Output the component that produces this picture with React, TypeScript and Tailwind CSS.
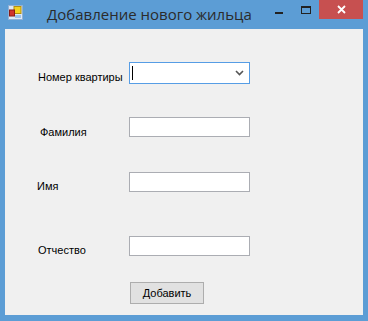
import React from "react";

/** WinForms風のラベル */
function Label({ text, left, top }: { text: string; left: number; top: number }) {
  return (
    <div className="w-[124px] shrink-0" style={{ paddingLeft: left, paddingTop: top }}>
      <span className="block whitespace-nowrap text-[11px] leading-[13px] text-black">{text}</span>
    </div>
  );
}

/** 白いテキストボックス */
function TextBox() {
  return <div className="h-[20px] w-[121px] border border-[#abadb3] bg-white" />;
}

function AppIcon() {
  return (
    <svg width="15" height="15" viewBox="0 0 15 15">
      <rect x="0.5" y="0.5" width="14" height="14" fill="#dfe9f5" stroke="#8fb0d6" />
      <rect x="6" y="1.5" width="7" height="7" fill="#f4d21f" stroke="#b08f10" />
      <rect x="1.5" y="5" width="5" height="6" fill="#d0342c" stroke="#8a1c16" />
      <rect x="7" y="10" width="6" height="3" fill="#9cc3ea" />
    </svg>
  );
}

export default function App() {
  return (
    <div className="flex h-[321px] w-[368px] flex-col overflow-hidden bg-[#5c9dd5] font-['Liberation_Sans',Arial,sans-serif]">
      {/* タイトルバー */}
      <div className="flex h-[29px] shrink-0 items-start">
        <div className="ml-[8px] mt-[5px]">
          <AppIcon />
        </div>
        <div className="ml-[24px] mt-[4px] font-['Open_Sans',sans-serif] text-[15px] leading-[20px] text-[#2b2b2b]">
          Добавление нового жильца
        </div>
        <div className="flex-1" />
        <div className="mt-[12px] h-[2px] w-[8px] bg-[#222]" />
        <div className="ml-[18px] mt-[6px] h-[8px] w-[10px] border border-t-2 border-[#222]" />
        <div className="ml-[8px] mr-[5px] flex h-[19px] w-[44px] items-center justify-center bg-[#c75050]">
          <svg width="9" height="9" viewBox="0 0 9 9">
            <path d="M1 1 L8 8 M8 1 L1 8" stroke="#fff" strokeWidth="1.8" />
          </svg>
        </div>
      </div>

      {/* クライアント領域 */}
      <div className="mx-[5px] h-[286px] shrink-0 bg-[#f0f0f0] pt-[33px]">
        <div className="flex h-[22px] items-start">
          <Label text="Номер квартиры" left={33} top={9} />
          <div className="flex h-[22px] w-[121px] shrink-0 items-center border border-[#569de5] bg-white">
            <div className="ml-[2px] h-[14px] w-px bg-black" />
            <div className="flex-1" />
            <svg width="9" height="6" viewBox="0 0 9 6" className="mr-[5px]">
              <path d="M1 1 L4.5 4.5 L8 1" stroke="#555" strokeWidth="1.6" fill="none" />
            </svg>
          </div>
        </div>

        <div className="mt-[33px] flex h-[20px] items-start">
          <Label text="Фамилия" left={35} top={9} />
          <TextBox />
        </div>

        <div className="mt-[35px] flex h-[20px] items-start">
          <Label text="Имя" left={32} top={8} />
          <TextBox />
        </div>

        <div className="mt-[44px] flex h-[20px] items-start">
          <Label text="Отчество" left={33} top={8} />
          <TextBox />
        </div>

        <div className="ml-[125px] mt-[26px] flex h-[22px] w-[74px] items-center justify-center border border-[#adadad] bg-[#e1e1e1] text-[11px] text-black">
          Добавить
        </div>
      </div>
    </div>
  );
}
